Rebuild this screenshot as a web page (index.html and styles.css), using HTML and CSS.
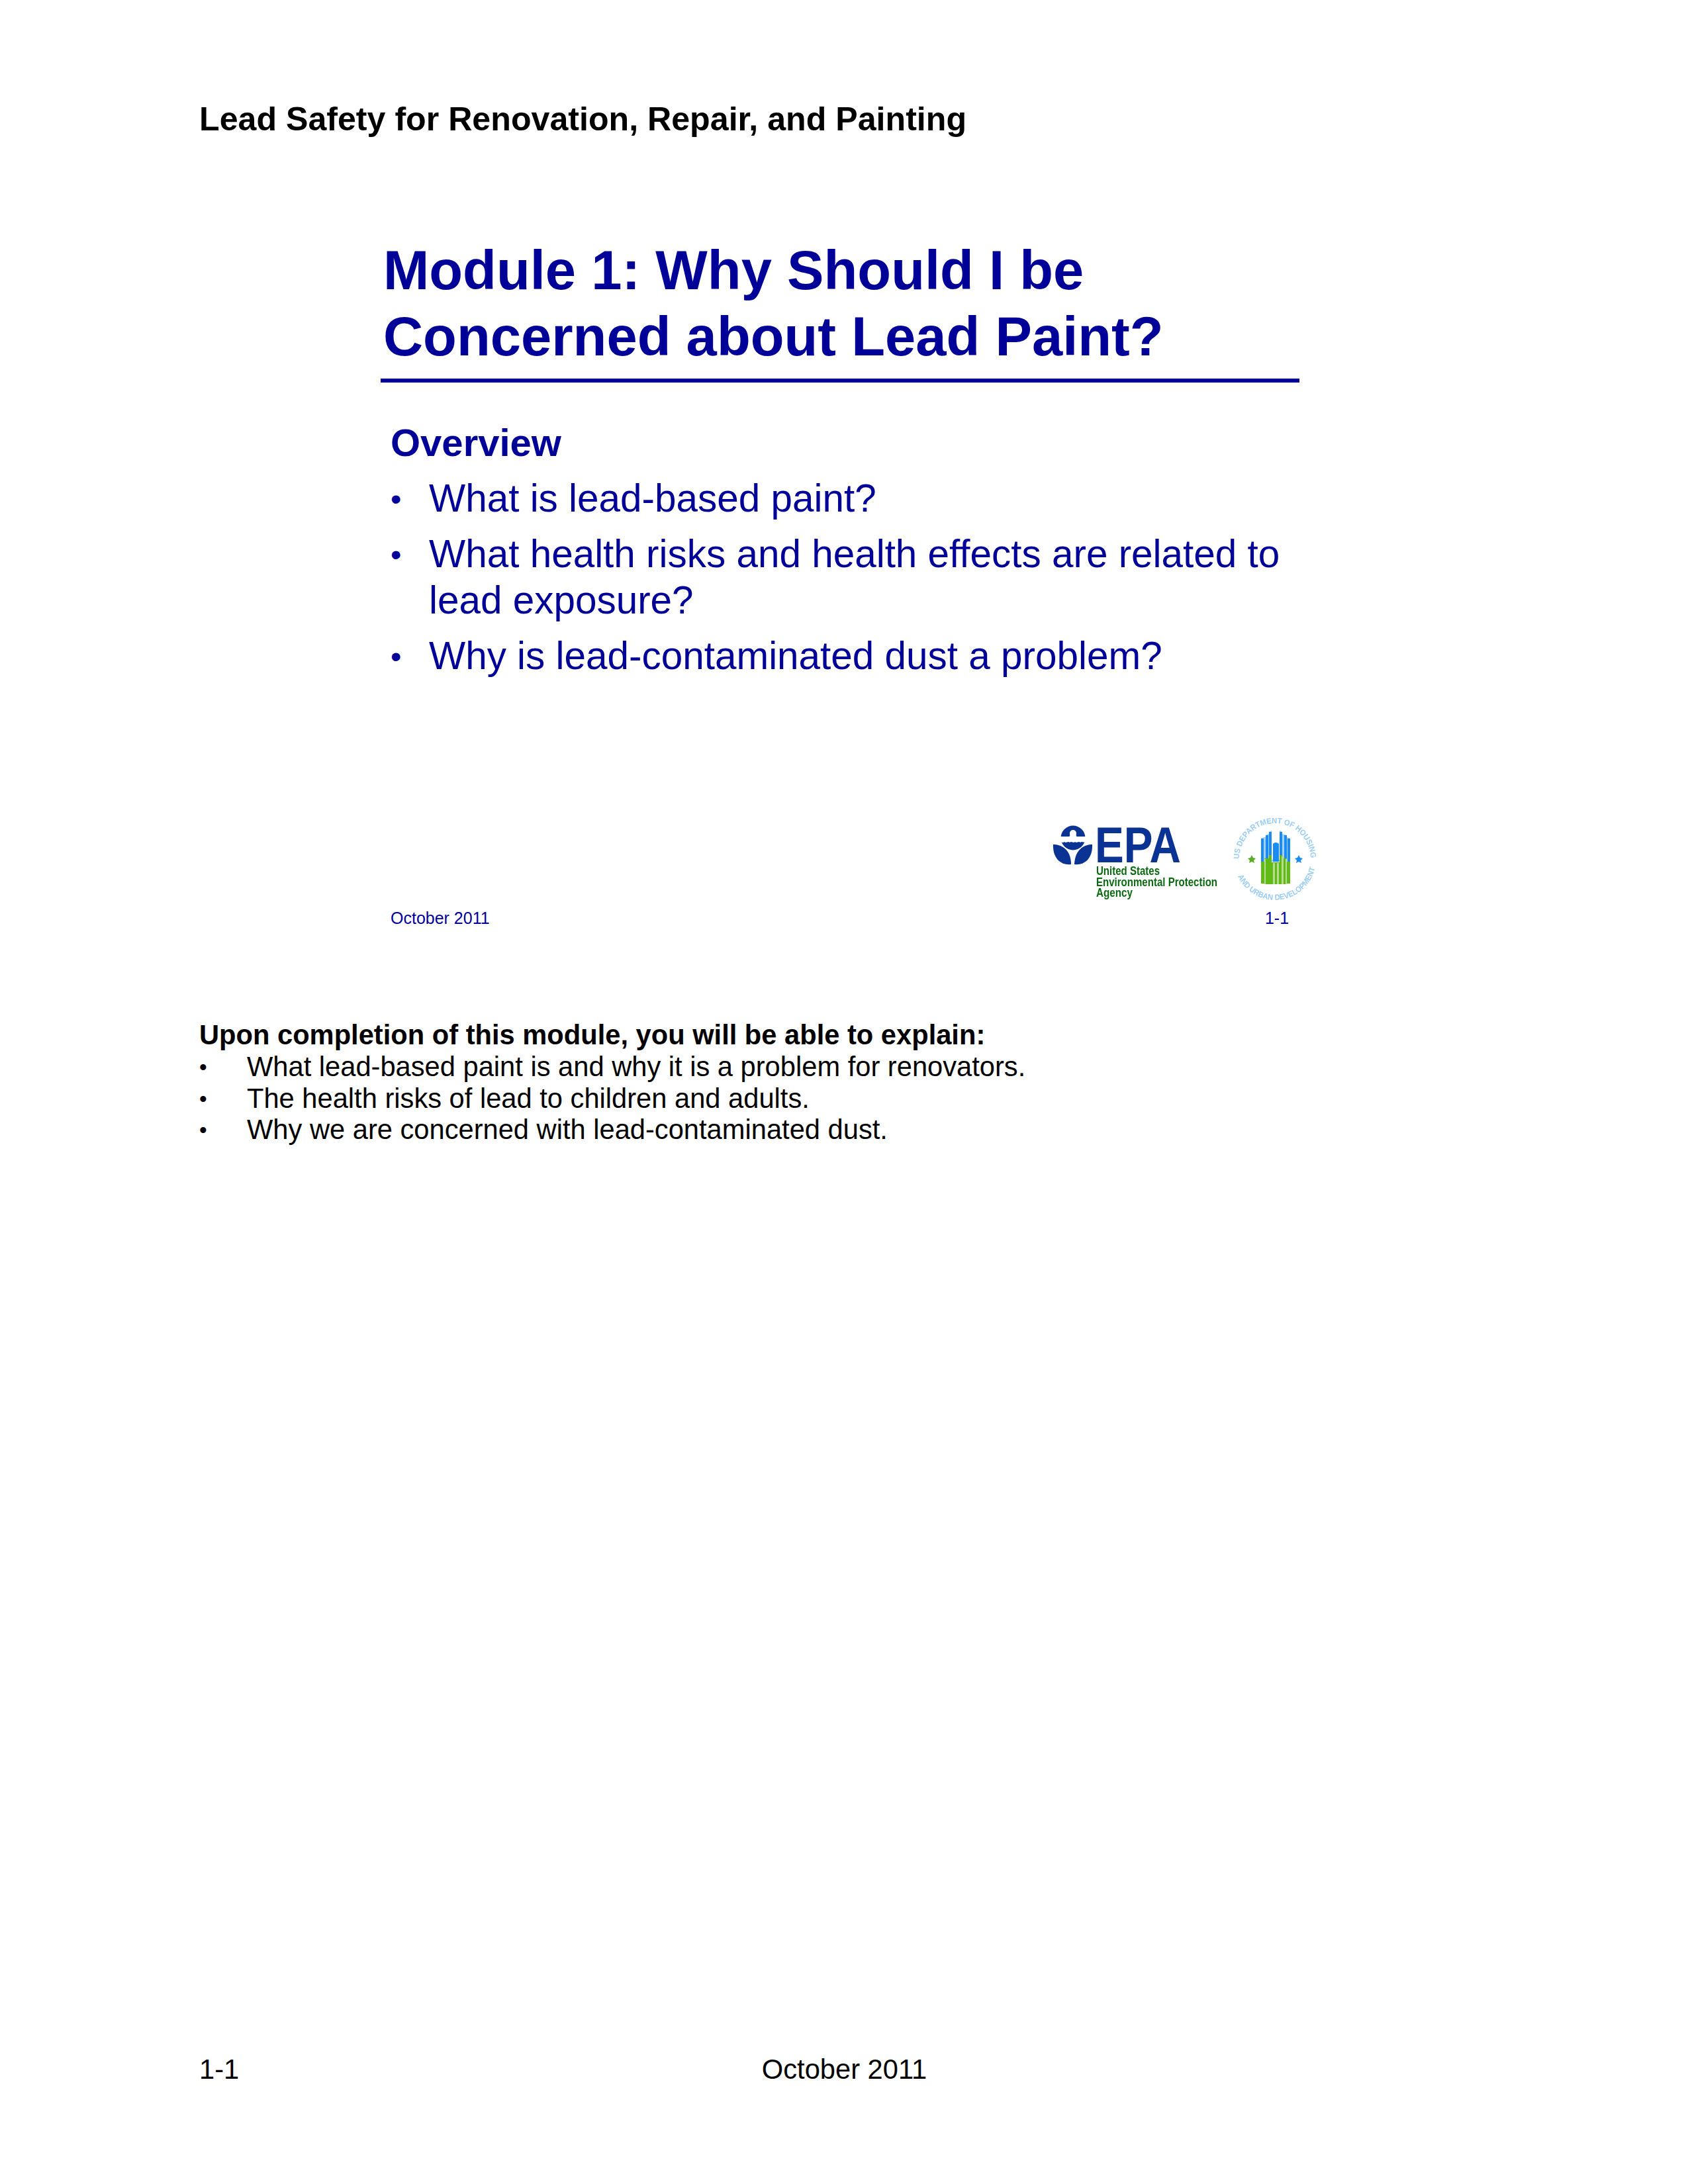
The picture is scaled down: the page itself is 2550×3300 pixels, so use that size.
FILE: index.html
```html
<!DOCTYPE html>
<html lang="en">
<head>
<meta charset="utf-8">
<title>Module 1</title>
<link rel="stylesheet" href="styles.css">
</head>
<body>
<div class="page">
  <header class="running-head">Lead Safety for Renovation, Repair, and Painting</header>
  <section class="slide">
    <h1 class="slide-title">Module 1: Why Should I be<br>Concerned about Lead Paint?</h1>
    <div class="slide-body">
      <h2 class="overview">Overview</h2>
      <ul class="slide-list">
        <li>What is lead-based paint?</li>
        <li>What health risks and health effects are related to lead exposure?</li>
        <li>Why is lead-contaminated dust a problem?</li>
      </ul>
    </div>
    <div class="slide-foot">
      <span class="slide-date">October 2011</span>
      <div class="logos">
        <svg class="logo-epa" width="250" height="125" viewBox="1590 1240 250 125" aria-label="EPA">
          <circle cx="1621" cy="1267" r="18.5" fill="#0a3393"/>
          <path d="M1602 1265 H1615 C1617 1264 1616 1262 1616 1260 A4.6 4.6 0 1 1 1626 1260 C1626 1262 1625 1264 1627 1265 H1640 V1272 C1637 1276 1635 1271 1632 1274 C1629 1271 1627 1276 1624 1273 C1621 1276 1619 1271 1616 1274 C1613 1271 1611 1276 1608 1273 C1606 1275 1604 1274 1602 1272 Z" fill="#fff"/>
          <path d="M1591 1277 C1603 1277 1618 1284 1618 1307 C1603 1309 1590 1298 1591 1277 Z" fill="#0a3393"/>
          <path d="M1650 1277 C1638 1277 1624 1284 1623 1307 C1638 1309 1651 1298 1650 1277 Z" fill="#0a3393"/>
          <text class="epa-mark" x="1654" y="1304" textLength="130" lengthAdjust="spacingAndGlyphs">EPA</text>
          <text class="epa-name" x="1656" y="1323" textLength="96" lengthAdjust="spacingAndGlyphs">United States</text>
          <text class="epa-name" x="1656" y="1340" textLength="183" lengthAdjust="spacingAndGlyphs">Environmental Protection</text>
          <text class="epa-name" x="1656" y="1356" textLength="55" lengthAdjust="spacingAndGlyphs">Agency</text>
        </svg>
        <div class="seal-col">
          <svg class="logo-hud" width="130" height="124" viewBox="1861 1237 130 124" aria-label="HUD">
            <defs>
              <path id="arc-top" d="M1872 1299 A54 54 0 0 1 1980 1299"/>
              <path id="arc-bottom" d="M1870 1325 A62 62 0 0 0 1987 1311"/>
            </defs>
            <text class="seal-text"><textPath href="#arc-top" textLength="168" lengthAdjust="spacingAndGlyphs">US DEPARTMENT OF HOUSING</textPath></text>
            <text class="seal-text"><textPath href="#arc-bottom" textLength="154" lengthAdjust="spacingAndGlyphs">AND URBAN DEVELOPMENT</textPath></text>
            <path d="M1905 1303 V1268 L1909 1266 H1912 V1263 L1916 1261 H1917 V1258 L1921 1256 V1300 H1933 V1256 L1937 1258 V1261 L1944 1263 V1266 L1949 1268 V1303 Z" fill="#a5d0fa"/>
            <g fill="#1a8cf2">
              <rect x="1905" y="1268" width="4" height="35"/>
              <rect x="1912" y="1263" width="4" height="36"/>
              <rect x="1917" y="1258" width="4" height="36"/>
              <path d="M1923 1303 V1276 Q1927 1272 1932 1276 V1303 Z"/>
              <rect x="1933" y="1258" width="4" height="36"/>
              <rect x="1940" y="1263" width="4" height="36"/>
              <rect x="1945" y="1268" width="4" height="35"/>
            </g>
            <path d="M1905 1303 H1910 V1298 H1917 V1293 H1921 V1304 H1933 V1293 H1937 V1298 H1944 V1303 H1949 V1336 H1944 V1337 H1910 V1336 H1905 Z" fill="#62ba16"/>
            <g fill="#b4dd90">
              <rect x="1910" y="1299" width="2" height="38"/>
              <rect x="1923" y="1305" width="3" height="32"/>
              <rect x="1929" y="1305" width="3" height="32"/>
              <rect x="1936" y="1295" width="3" height="42"/>
              <rect x="1942" y="1299" width="2" height="38"/>
            </g>
            <polygon points="1891,1293 1893,1297 1897,1298 1894,1301 1895,1305 1891,1303 1887,1305 1888,1301 1885,1298 1889,1297" fill="#5aae2a"/>
            <polygon points="1962,1293 1964,1297 1968,1298 1965,1301 1966,1305 1962,1303 1958,1305 1959,1301 1956,1298 1960,1297" fill="#1a8cf2"/>
          </svg>
          <span class="slide-page">1-1</span>
        </div>
      </div>
    </div>
  </section>
  <section class="objectives">
    <p class="objectives-lead">Upon completion of this module, you will be able to explain:</p>
    <ul class="objectives-list">
      <li>What lead-based paint is and why it is a problem for renovators.</li>
      <li>The health risks of lead to children and adults.</li>
      <li>Why we are concerned with lead-contaminated dust.</li>
    </ul>
  </section>
  <footer class="page-foot">
    <span>1-1</span>
    <span>October 2011</span>
    <span></span>
  </footer>
</div>
</body>
</html>
```
FILE: styles.css
```css
* { box-sizing: border-box; }
html, body { margin: 0; padding: 0; background: #fff; }
body { font-family: "Liberation Sans", Arial, sans-serif; color: #000; }

.page {
  width: 2550px;
  height: 3300px;
  padding: 150px 300px 0 301px;
  display: flex;
  flex-direction: column;
}

.running-head { font-size: 50.15px; font-weight: 700; line-height: 60px; }

.slide {
  margin-top: 149px;
  margin-left: 274px;
  width: 1416px;
  color: #000099;
}
.slide-title {
  margin: 0;
  padding: 0 0 13px 4px;
  width: 1388px;
  font-size: 83.2px;
  font-weight: 700;
  line-height: 100px;
  border-bottom: 6px solid #000099;
}
.slide-body { padding: 56px 0 0 15px; }
.overview { margin: 0; font-size: 58px; font-weight: 700; line-height: 70px; }
.slide-list { list-style: none; margin: 0; padding: 0; width: 1365px; }
.slide-list li {
  position: relative;
  padding-left: 58px;
  margin-top: 14px;
  font-size: 58.45px;
  line-height: 70px;
}
.slide-list li::before { content: "•"; position: absolute; left: 0; top: 1px; font-size: 0.8em; }

.slide-foot {
  display: flex;
  justify-content: space-between;
  align-items: flex-end;
  padding-left: 15px;
  margin-top: 210px;
}
.slide-date { font-size: 25px; line-height: 30px; }
.logos { display: flex; align-items: flex-start; gap: 21px; }
.logo-epa { display: block; margin-top: 3px; }
.logo-hud { display: block; }
.logo-epa, .logo-hud { filter: blur(0.5px); }
.seal-col { display: flex; flex-direction: column; align-items: center; }
.slide-page { font-size: 25px; line-height: 30px; margin-top: 12px; padding-left: 6px; }

.epa-mark { font-family: "Liberation Sans", sans-serif; font-weight: 700; font-size: 76px; fill: #0a3393; }
.epa-name { font-family: "Liberation Sans", sans-serif; font-weight: 700; font-size: 19px; fill: #0a6a10; }
.seal-text { font-family: "Liberation Sans", sans-serif; font-weight: 700; font-size: 12px; fill: #9accf6; }

.objectives { margin-top: 138px; font-size: 41.67px; line-height: 47.8px; }
.objectives-lead { margin: 0; font-weight: 700; }
.objectives-list { list-style: none; margin: 0; padding: 0; }
.objectives-list li { position: relative; padding-left: 72px; }
.objectives-list li::before { content: "•"; position: absolute; left: 0; top: 1px; font-size: 0.8em; }

.page-foot {
  margin-top: auto;
  margin-bottom: 148px;
  display: grid;
  grid-template-columns: 1fr auto 1fr;
  font-size: 41.67px;
  line-height: 50px;
}
```
